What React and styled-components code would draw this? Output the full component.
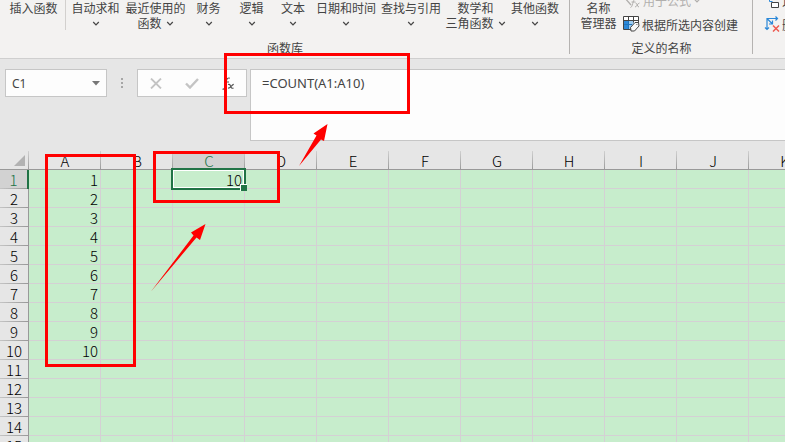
import React from "react";
import styled, { createGlobalStyle, css } from "styled-components";

const GlobalStyle = createGlobalStyle`
  * { box-sizing: border-box; }
  body {
    margin: 0;
    overflow: hidden;
    background: #e6e6e6;
    font-family: "Noto Sans CJK SC", sans-serif;
    font-size: 12px;
    color: #444;
  }
  button, input, textarea { font: inherit; color: inherit; border: 0; padding: 0; margin: 0; background: none; }
`;

const Page = styled.main`
  position: relative;
  height: 100vh;
  overflow: hidden;
`;

/* Ribbon */
const Ribbon = styled.header`
  display: flex;
  height: 59px;
  overflow: hidden;
  background: #f3f2f1;
  border-bottom: 1px solid #cfcfcf;
`;

const Group = styled.section`
  position: relative;
  flex: none;
  display: flex;
  flex-direction: column;
  &::after {
    content: "";
    position: absolute;
    right: 0;
    top: 0;
    width: 1px;
    height: 54px;
    background: #b5b3b1;
  }
`;

const GroupBody = styled.div`
  display: flex;
  height: 38px;
  padding-left: ${(p) => p.$start || 0}px;
  padding-right: ${(p) => p.$end || 0}px;
`;

const GroupLabel = styled.h2`
  margin: 0;
  font-size: 12px;
  font-weight: 400;
  line-height: 20px;
  text-align: center;
`;

const BigButton = styled.button`
  width: ${(p) => p.$w}px;
  display: flex;
  flex-direction: column;
  align-items: center;
  white-space: nowrap;
  line-height: 15px;
`;

const Line = styled.span`
  display: flex;
  align-items: center;
  gap: 4px;
  height: 15px;
`;

const Divider = styled.i`
  width: 1px;
  height: 30px;
  background: #d2d0ce;
`;

const Stack = styled.div`
  display: flex;
  flex-direction: column;
  justify-content: flex-end;
  height: 36px;
  overflow: hidden;
`;

const SmallButton = styled.button`
  flex: none;
  display: flex;
  align-items: center;
  gap: 2px;
  height: 24px;
  white-space: nowrap;
  color: ${(p) => (p.disabled ? "#b1afad" : "#444")};
`;

/* Formula bar */
const FormulaBar = styled.section`
  display: flex;
  align-items: flex-start;
  height: 92px;
  padding: 10px 0 10px 5px;
  background: #e6e6e6;
`;

const NameBox = styled.div`
  display: flex;
  flex: none;
  width: 102px;
  height: 28px;
  border: 1px solid #c6c6c6;
  background: #fdfdfd;
  input {
    flex: 1;
    min-width: 0;
    padding-left: 6px;
    font-family: "Noto Sans", sans-serif;
  }
  button { width: 20px; display: grid; place-items: center; }
`;

const Grip = styled.span`
  display: grid;
  place-items: center;
  width: 30px;
  height: 28px;
`;

const Actions = styled.div`
  flex: none;
  display: grid;
  grid-template-columns: repeat(3, 36px);
  width: 110px;
  height: 28px;
  margin-right: 3px;
  border: 1px solid #c6c6c6;
  background: #fdfdfd;
  button { display: grid; place-items: center; }
`;

const FormulaInput = styled.textarea`
  flex: 1;
  height: 72px;
  padding: 4px 11px;
  border: 1px solid #c6c6c6;
  border-right: 0;
  background: #fdfdfd;
  font-family: "Noto Sans", sans-serif;
  font-size: 13px;
  line-height: 18px;
  resize: none;
  outline: 0;
`;

/* Worksheet */
const Sheet = styled.table`
  table-layout: fixed;
  width: 821px;
  border-collapse: separate;
  border-spacing: 0;
  color: #000;
  font-family: "Noto Sans CJK SC", sans-serif;
  font-size: 15px;
  line-height: 19px;
  th, td { height: 19px; padding: 0; font-weight: 300; }
`;

const IndexCol = styled.col`
  width: 29px;
`;

const headLines = css`
  background-image: linear-gradient(#999, #999), linear-gradient(#d0d0d0, #999);
  background-position: bottom, right;
  background-size: 100% 1px, 1px 100%;
  background-repeat: no-repeat;
`;

const Corner = styled.th`
  background-color: #e6e6e6;
  ${headLines}
  svg { display: block; margin-left: 14px; }
`;

const ColumnHead = styled.th`
  background-color: ${(p) => (p.$active ? "#d2d2d2" : "#e6e6e6")};
  ${headLines}
  color: ${(p) => (p.$active ? "#217346" : "#000")};
`;

const RowHead = styled.th`
  border-right: 1px solid #999;
  background: linear-gradient(90deg, #c4c4c4, #999) bottom / 100% 1px no-repeat
    ${(p) => (p.$active ? "#d2d2d2" : "#e6e6e6")};
  ${(p) =>
    p.$active &&
    css`
      border-right: 2px solid #217346;
      color: #217346;
    `}
`;

const Cell = styled.td`
  position: relative;
  text-align: right;
  background: linear-gradient(#d4d0d4, #d4d0d4) bottom / 100% 1px no-repeat,
    linear-gradient(#d4d0d4, #d4d0d4) right / 1px 100% no-repeat #c7edcc;
  && { padding-right: 3px; }
  ${(p) =>
    p.$selected &&
    css`
      z-index: 1;
      &::before {
        content: "";
        position: absolute;
        inset: -2px -1px -1px -2px;
        border: 2px solid #217346;
        box-shadow: inset 0 0 0 1px #fff;
      }
      &::after {
        content: "";
        position: absolute;
        right: -2px;
        bottom: -2px;
        width: 6px;
        height: 6px;
        border: solid #fff;
        border-width: 1px 0 0 1px;
        background: #217346;
      }
    `}
`;

/* Red annotations lying over the window */
const Frame = styled.div`
  position: absolute;
  z-index: 2;
  left: ${(p) => p.$x}px;
  top: ${(p) => p.$y}px;
  width: ${(p) => p.$w}px;
  height: ${(p) => p.$h}px;
  border: 3px solid #f00;
  pointer-events: none;
`;

const Arrow = styled.svg`
  position: absolute;
  z-index: 2;
  left: ${(p) => p.$x}px;
  top: ${(p) => p.$y}px;
  fill: #f00;
  pointer-events: none;
`;

const Chevron = () => (
  <svg width="8" height="6" viewBox="0 0 8 6" fill="none" stroke="currentColor" strokeWidth="1.2" aria-hidden="true">
    <path d="M1.2 2 4 4.800l2.800-2.800" />
  </svg>
);

const FunctionIcon = () => (
  <svg width="18" height="16" viewBox="0 0 18 16" fill="none" stroke="currentColor" aria-hidden="true">
    <path d="M1 5V1h5l4 4M1 5l7 8" strokeWidth="1.3" />
    <path d="M7.500 15.500c2 0 2.500-8 4.500-8.500M8.500 10h4M12.500 11c2 0 1.500 4 3.500 4M16.500 11c-2 0-2.500 4-4.500 4" />
  </svg>
);

const SelectionIcon = () => (
  <svg width="17" height="16" viewBox="0 0 17 16" fill="none" aria-hidden="true">
    <path d="M1 1h14v12H1z" fill="#fff" />
    <path d="M1 5h5v8H1z" fill="#2b88d8" />
    <path d="M6 5h5v4L7 13H6z" fill="#9ccbf0" />
    <path d="M1 8.500h8M5.500 5v8" stroke="#1f74bd" />
    <path d="M8 13.500H.5V.5h15V7M.5 4.500h15M5.500.5v4M10.500.5v6" stroke="#444" />
    <path d="m7.500 11.500 4.500-5 3.500 0 .5 3.500-4.500 5H8z" fill="#f8f8f8" stroke="#444" />
    <path d="M13.500 8.500h.8" stroke="#444" />
  </svg>
);

const DependentsIcon = () => (
  <svg width="16" height="22" viewBox="0 0 16 22" fill="#fff" aria-hidden="true">
    <path d="M5.500 3.500h9v4h-9z" stroke="#444" />
    <path d="M5.500 9v3.500h3" stroke="#2b88d8" fill="none" />
    <path d="M7.500 13.500h7v5h-7z" stroke="#444" />
  </svg>
);

const RemoveArrowsIcon = () => (
  <svg width="16" height="16" viewBox="0 0 16 16" fill="none" aria-hidden="true">
    <g stroke="#2b88d8" strokeWidth="1.200">
      <path d="M3 13.500V2.500H13.500M11.500.5l2 2-2 2M1 11.500l2 2 2-2M3.500 3l4.500 4.500M8.500 4.500V8H5" />
    </g>
    <path d="m9 9.500 6 6m0-6-6 6" stroke="#ee5a50" strokeWidth="1.500" />
  </svg>
);

const FUNCTIONS = [
  { top: "自动求和", w: 59 },
  { top: "最近使用的", bottom: "函数", w: 61 },
  { top: "财务", w: 45 },
  { top: "逻辑", w: 41 },
  { top: "文本", w: 42 },
  { top: "日期和时间", w: 64 },
  { top: "查找与引用", w: 66 },
  { top: "数学和", bottom: "三角函数", w: 63 },
  { top: "其他函数", w: 56 },
];

const COLUMNS = ["A", "B", "C", "D", "E", "F", "G", "H", "I", "J", "K"];
const ROWS = Array.from({ length: 15 }, (_, i) => i + 1);

function valueAt(col, row) {
  if (col === "A" && row <= 10) return row;
  if (col === "C" && row === 1) return 10;
  return null;
}

export default function App() {
  return (
    <>
      <GlobalStyle />
      <Page>
        <Ribbon>
          <Group>
            <GroupBody $start={2} $end={7}>
              <BigButton $w={63}>
                <Line>插入函数</Line>
              </BigButton>
              <Divider />
              {FUNCTIONS.map((f) => (
                <BigButton key={f.top} $w={f.w}>
                  <Line>{f.top}</Line>
                  <Line>
                    {f.bottom}
                    <Chevron />
                  </Line>
                </BigButton>
              ))}
            </GroupBody>
            <GroupLabel>函数库</GroupLabel>
          </Group>
          <Group>
            <GroupBody $start={4} $end={15}>
              <BigButton $w={49}>
                <Line>名称</Line>
                <Line>管理器</Line>
              </BigButton>
              <Stack>
                <SmallButton disabled>
                  <FunctionIcon />
                  用于公式
                  <Chevron />
                </SmallButton>
                <SmallButton>
                  <SelectionIcon />
                  根据所选内容创建
                </SmallButton>
              </Stack>
            </GroupBody>
            <GroupLabel>定义的名称</GroupLabel>
          </Group>
          <Group>
            <GroupBody $start={11} $end={14}>
              <Stack>
                <SmallButton>
                  <DependentsIcon />
                  追踪从属单元格
                </SmallButton>
                <SmallButton>
                  <RemoveArrowsIcon />
                  删除箭头
                </SmallButton>
              </Stack>
            </GroupBody>
          </Group>
        </Ribbon>

        <FormulaBar>
          <NameBox>
            <input aria-label="名称框" defaultValue="C1" />
            <button aria-label="展开名称框">
              <svg width="8" height="5" viewBox="0 0 8 5" fill="#777" aria-hidden="true">
                <path d="M0 0h8L4 4.5z" />
              </svg>
            </button>
          </NameBox>
          <Grip>
            <svg width="2" height="10" viewBox="0 0 2 10" fill="#a6a6a6" aria-hidden="true">
              <path d="M0 0h2v2H0zM0 4h2v2H0zM0 8h2v2H0z" />
            </svg>
          </Grip>
          <Actions>
            <button aria-label="取消">
              <svg width="12" height="11" viewBox="0 0 12 11" stroke="#c4c4c4" strokeWidth="1.8" aria-hidden="true">
                <path d="m1 .5 10 10M11 .5l-10 10" />
              </svg>
            </button>
            <button aria-label="输入">
              <svg width="14" height="11" viewBox="0 0 14 11" fill="none" stroke="#c4c4c4" strokeWidth="2.4" aria-hidden="true">
                <path d="m1 5.500 4 4L13 1" />
              </svg>
            </button>
            <button aria-label="插入函数">
              <svg width="13" height="13" viewBox="0 0 13 13" fill="none" stroke="#555" strokeWidth="1.2" aria-hidden="true">
                <path d="M.5 12c2 .8 2.700-1 3.200-4L4.500 3.500C4.900 1.500 6 .6 7.800 1.200M2.500 5h4.500" />
                <path d="M6 7.500c1.500-.6 2 .2 2.600 1.800S10 11.700 11.500 11M11.800 7.300C10 7 8.500 11.500 6 11.200" />
              </svg>
            </button>
          </Actions>
          <FormulaInput aria-label="编辑栏" defaultValue="=COUNT(A1:A10)" spellCheck={false} />
        </FormulaBar>

        <Sheet>
          <colgroup>
            <IndexCol />
            {COLUMNS.map((c) => (
              <col key={c} />
            ))}
          </colgroup>
          <thead>
            <tr>
              <Corner aria-label="全选">
                <svg width="12" height="12" viewBox="0 0 12 12" fill="#b2b2b2" aria-hidden="true">
                  <path d="M11 0v11H0z" />
                </svg>
              </Corner>
              {COLUMNS.map((c) => (
                <ColumnHead key={c} scope="col" $active={c === "C"}>
                  {c}
                </ColumnHead>
              ))}
            </tr>
          </thead>
          <tbody>
            {ROWS.map((r) => (
              <tr key={r}>
                <RowHead scope="row" $active={r === 1}>
                  {r}
                </RowHead>
                {COLUMNS.map((c) => (
                  <Cell key={c} $selected={c === "C" && r === 1}>
                    {valueAt(c, r)}
                  </Cell>
                ))}
              </tr>
            ))}
          </tbody>
        </Sheet>

        <Frame $x={224} $y={53} $w={186} $h={61} />
        <Frame $x={45} $y={154} $w={91} $h={213} />
        <Frame $x={153} $y={151} $w={127} $h={52} />
        <Arrow $x={298} $y={123} width="31" height="44" viewBox="0 0 31 44" aria-hidden="true">
          <path d="M29.500 1 15.500 10.500 18.500 12.500 1 43 23 16.500 26 18z" />
        </Arrow>
        <Arrow $x={150} $y={223} width="57" height="69" viewBox="0 0 57 69" aria-hidden="true">
          <path d="M55.500 1 41 9.500 43.500 12.500 1 68.500 46.500 14.500 50 17z" />
        </Arrow>
      </Page>
    </>
  );
}
